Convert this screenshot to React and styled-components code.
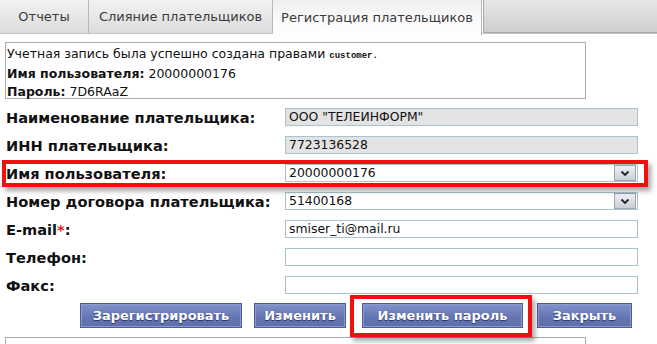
import React from "react";
import styled, { createGlobalStyle, css } from "styled-components";

const GlobalStyle = createGlobalStyle`
  html, body {
    margin: 0;
    padding: 0;
    background: #ffffff;
    overflow: hidden;
  }
  body {
    font-family: "DejaVu Sans", Verdana, sans-serif;
    color: #111;
  }
`;

const Page = styled.div`
  width: 657px;
  height: 344px;
  overflow: hidden;
  position: relative;
`;

const TabBar = styled.div`
  display: flex;
  height: 34px;
  border-bottom: 1px solid #c4c4c4;
  box-sizing: border-box;
`;

const Tab = styled.div`
  display: flex;
  align-items: center;
  justify-content: center;
  box-sizing: border-box;
  width: ${(p) => p.w}px;
  height: ${(p) => (p.active ? 35 : 33)}px;
  font-size: 13px;
  color: #3a3a3a;
  border-right: 1px solid #b8b8b8;
  background: ${(p) =>
    p.active
      ? "linear-gradient(#efefef, #fbfbfb 60%, #ffffff)"
      : "linear-gradient(#f2f2f2, #dcdcdc)"};
  z-index: ${(p) => (p.active ? 1 : 0)};
`;

const TabRest = styled.div`
  flex: 1;
  height: 33px;
  margin-left: 1px;
  box-sizing: border-box;
  border: 1px solid #a8a8a8;
  border-top: none;
  border-right: none;
  background: linear-gradient(#e6e6e6, #cfcfcf);
`;

const Content = styled.div`
  padding: 8px 0 0 5px;
`;

const InfoBox = styled.div`
  width: 581px;
  height: 57px;
  box-sizing: border-box;
  border: 1px solid #ababab;
  padding: 2px 0 0 1px;
  font-size: 12.5px;
  line-height: 18px;
  color: #111;
`;

const Mono = styled.span`
  font-family: "Liberation Mono", "Courier New", monospace;
  font-size: 9px;
  font-weight: bold;
`;

const Form = styled.div`
  display: grid;
  grid-template-columns: 279px 354px;
  grid-auto-rows: 28px;
  margin-top: 4px;
  margin-left: 1px;
`;

const Row = styled.div`
  display: contents;
`;

const Label = styled.div`
  display: flex;
  align-items: center;
  font-weight: bold;
  font-size: 14.6px;
  color: #111;
  position: relative;
  ${(p) =>
    p.highlight &&
    css`
      &::after {
        content: "";
        position: absolute;
        left: -4px;
        top: 1px;
        width: 638px;
        height: 19px;
        border: 4px solid #f01010;
        box-shadow: 3px 4px 5px rgba(0, 0, 0, 0.35);
        z-index: 2;
        pointer-events: none;
      }
    `}
`;

const Star = styled.span`
  color: #e01818;
`;

const Cell = styled.div`
  display: flex;
  align-items: center;
`;

const Field = styled.div`
  width: 353px;
  height: 18px;
  box-sizing: border-box;
  border: 1px solid #a9c4cc;
  background: ${(p) => (p.disabled ? "#e3e3e3" : "#ffffff")};
  font-size: 12.4px;
  line-height: 16px;
  padding-left: 3px;
  color: #111;
  display: flex;
  align-items: center;
  justify-content: space-between;
`;

const Arrow = styled.div`
  width: 22px;
  height: 16px;
  margin-right: 1px;
  box-sizing: border-box;
  border: 1px solid #9aa6b4;
  background: linear-gradient(#eef0f4, #c9ced8);
  display: flex;
  align-items: center;
  justify-content: center;
`;

const Buttons = styled.div`
  display: flex;
  gap: 12px;
  margin: 4px 0 0 75px;
  align-items: center;
`;

const ButtonWrap = styled.div`
  position: relative;
  margin: 0 ${(p) => (p.highlight ? "2px 0 4px" : "0")};
  ${(p) =>
    p.highlight &&
    css`
      &::after {
        content: "";
        position: absolute;
        left: -12px;
        top: -8px;
        right: -9px;
        bottom: -9px;
        border: 4px solid #f01010;
        box-shadow: 3px 4px 5px rgba(0, 0, 0, 0.35);
        pointer-events: none;
        z-index: 2;
      }
    `}
`;

const Button = styled.div`
  width: ${(p) => p.w}px;
  height: 25px;
  box-sizing: border-box;
  border: 1px solid #4b5d95;
  box-shadow: inset 0 0 0 1px #8b9bd0;
  background: linear-gradient(#8393cc, #6676b2 55%, #5e6eab);
  color: #ffffff;
  font-weight: bold;
  font-size: 13px;
  display: flex;
  align-items: center;
  justify-content: center;
  white-space: nowrap;
  text-shadow: 0 1px 1px #2a3360;
`;

const BottomBox = styled.div`
  width: 581px;
  height: 20px;
  margin-top: 9px;
  box-sizing: border-box;
  border: 1px solid #ababab;
`;

const Chevron = () => (
  <svg width="10" height="7" viewBox="0 0 10 7">
    <path d="M1.5 1.5 L5 5 L8.5 1.5" fill="none" stroke="#222" strokeWidth="1.8" />
  </svg>
);

const fields = [
  { label: "Наименование плательщика:", value: 'ООО "ТЕЛЕИНФОРМ"', disabled: true },
  { label: "ИНН плательщика:", value: "7723136528", disabled: true },
  { label: "Имя пользователя:", value: "20000000176", select: true, highlight: true },
  { label: "Номер договора плательщика:", value: "51400168", select: true },
  { label: "E-mail", star: true, value: "smiser_ti@mail.ru" },
  { label: "Телефон:", value: "" },
  { label: "Факс:", value: "" },
];

const buttons = [
  { text: "Зарегистрировать", w: 162 },
  { text: "Изменить", w: 92 },
  { text: "Изменить пароль", w: 161, highlight: true },
  { text: "Закрыть", w: 95 },
];

export default function App() {
  return (
    <Page>
      <GlobalStyle />
      <TabBar>
        <Tab w={89}>Отчеты</Tab>
        <Tab w={184}>Слияние плательщиков</Tab>
        <Tab w={209} active>
          Регистрация плательщиков
        </Tab>
        <TabRest />
      </TabBar>
      <Content>
        <InfoBox>
          Учетная запись была успешно создана правами <Mono>customer.</Mono>
          <br />
          <b>Имя пользователя:</b> 20000000176
          <br />
          <b>Пароль:</b> 7D6RAaZ
        </InfoBox>
        <Form>
          {fields.map((f) => (
            <Row key={f.label}>
              <Label highlight={f.highlight}>
                {f.label}
                {f.star && (
                  <>
                    <Star>*</Star>:
                  </>
                )}
              </Label>
              <Cell>
                <Field disabled={f.disabled}>
                  <span>{f.value}</span>
                  {f.select && (
                    <Arrow>
                      <Chevron />
                    </Arrow>
                  )}
                </Field>
              </Cell>
            </Row>
          ))}
        </Form>
        <Buttons>
          {buttons.map((b) => (
            <ButtonWrap key={b.text} highlight={b.highlight}>
              <Button w={b.w}>{b.text}</Button>
            </ButtonWrap>
          ))}
        </Buttons>
        <BottomBox />
      </Content>
    </Page>
  );
}
